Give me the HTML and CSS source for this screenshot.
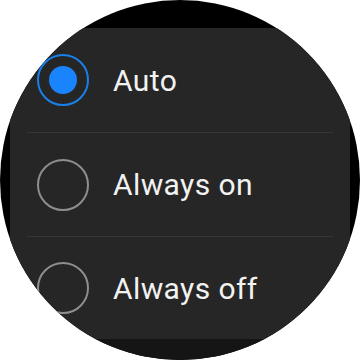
FILE: index.html
```html
<!DOCTYPE html>
<html>
<head>
<meta charset="utf-8">
<link rel="stylesheet" href="styles.css">
</head>
<body>
<div class="watch">
  <div class="panel">
    <div class="row">
      <span class="radio checked"><span class="dot"></span></span>
      <span class="label">Auto</span>
    </div>
    <div class="row sep">
      <span class="radio"></span>
      <span class="label">Always on</span>
    </div>
    <div class="row sep last">
      <span class="radio"></span>
      <span class="label">Always off</span>
    </div>
  </div>
  <div class="footer"></div>
</div>
</body>
</html>
```

FILE: styles.css
```css
html, body {
  margin: 0;
  padding: 0;
  background: #ffffff;
}
.watch {
  width: 360px;
  height: 360px;
  border-radius: 50%;
  overflow: hidden;
  background: #000000;
  padding-top: 28px;
  box-sizing: border-box;
  display: flex;
  flex-direction: column;
}
.panel {
  margin: 0 10px;
  background: #262626;
  display: flex;
  flex-direction: column;
}
.row {
  height: 104px;
  margin: 0 17px;
  padding-left: 10px;
  display: flex;
  align-items: center;
  gap: 24px;
  box-sizing: border-box;
}
.row.sep {
  border-top: 1px solid #363636;
}
.row.last {
  height: 103px;
}
.radio {
  width: 52px;
  height: 52px;
  border-radius: 50%;
  border: 2px solid #8e8e8e;
  box-sizing: border-box;
  display: flex;
  align-items: center;
  justify-content: center;
  flex: none;
}
.radio.checked {
  border-color: #1a7fe8;
}
.dot {
  width: 28px;
  height: 28px;
  border-radius: 50%;
  background: #1a84ff;
}
.label {
  font-family: Roboto, "Noto Sans", sans-serif;
  font-size: 30px;
  letter-spacing: 0.4px;
  color: #f2f2f2;
  line-height: 1;
  margin-top: 1px;
}
.footer {
  flex: 1;
  background: #151515;
}
```
